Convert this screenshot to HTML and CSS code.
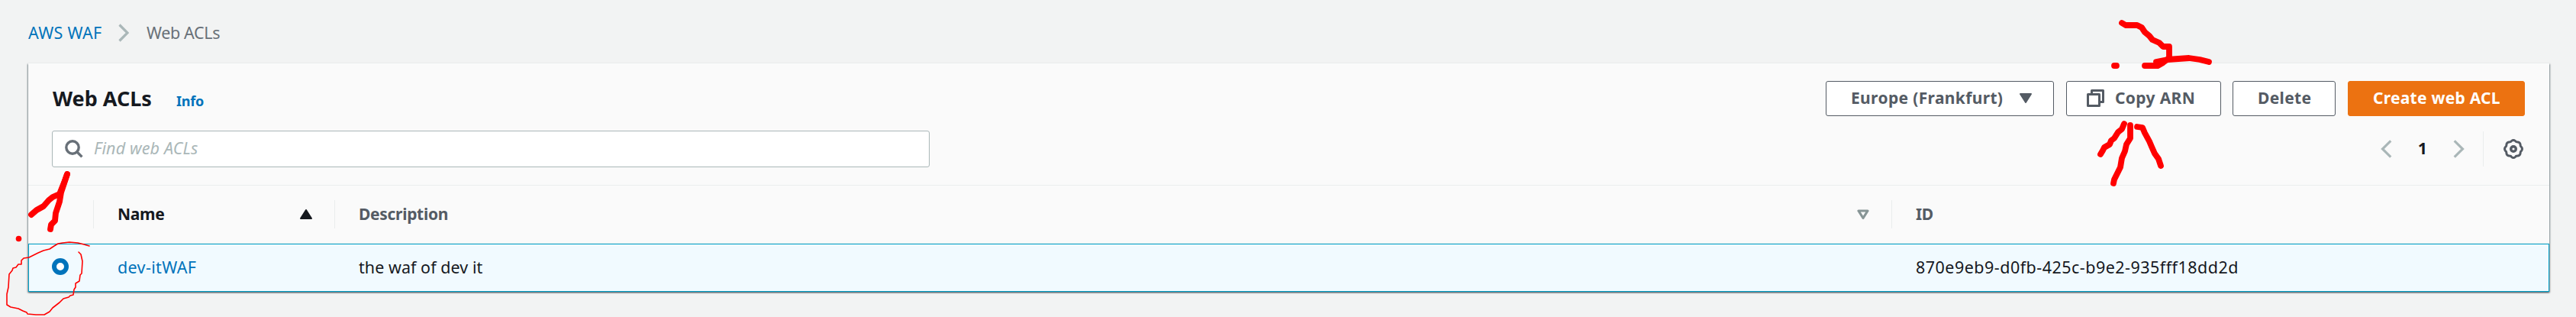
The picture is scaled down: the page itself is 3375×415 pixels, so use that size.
FILE: index.html
```html
<!DOCTYPE html>
<html lang="en">
<head>
<meta charset="utf-8">
<title>Web ACLs</title>
<link rel="stylesheet" href="styles.css">
</head>
<body>
<nav class="breadcrumb">
  <a class="crumb-link">AWS WAF</a>
  <svg class="crumb-chevron" width="14" height="24" viewBox="0 0 14 24"><path d="M1.5 1.5 12 12 1.5 22.5"/></svg>
  <span class="crumb-current">Web ACLs</span>
</nav>
<main class="panel">
  <header class="panel-head">
    <h1 class="title">Web ACLs</h1>
    <a class="info">Info</a>
    <div class="actions">
      <button class="btn region"><span>Europe (Frankfurt)</span><svg width="16" height="13" viewBox="0 0 16 13"><path d="M1 1h14L8 12z" fill="#545b64" stroke="#545b64" stroke-width="2" stroke-linejoin="round"/></svg></button>
      <button class="btn copy"><svg width="23" height="23" viewBox="0 0 23 23" fill="none" stroke="#545b64" stroke-width="3" stroke-linejoin="round"><path d="M1.5 6.5h15v15h-15z"/><path d="M6.500 6V1.500h15v15H17"/></svg><span>Copy ARN</span></button>
      <button class="btn delete"><span>Delete</span></button>
      <button class="btn primary"><span>Create web ACL</span></button>
    </div>
  </header>
  <div class="tools">
    <div class="search">
      <svg width="24" height="24" viewBox="0 0 24 24" fill="none" stroke="#687078" stroke-width="3.4"><circle cx="10" cy="10" r="8.2"/><path d="M15.8 15.8 22.4 22.4"/></svg>
      <span class="placeholder">Find web ACLs</span>
    </div>
    <div class="pager">
      <svg class="chev" width="15" height="24" viewBox="0 0 15 24"><path d="M13.3 1.3 2.5 12l10.8 10.7"/></svg>
      <span class="page">1</span>
      <svg class="chev" width="15" height="24" viewBox="0 0 15 24"><path d="M1.7 1.3 12.5 12 1.7 22.7"/></svg>
      <span class="divider"></span>
      <svg class="gear" width="26" height="26" viewBox="0 0 26 26" fill="none" stroke="#545b64"><path stroke-width="3" stroke-linejoin="round" d="M10.7 2.4Q13 .7 15.3 2.4Q16.2 4.1 18.9 3.9Q21.7 4.3 22.1 7.1Q21.9 9.8 23.6 10.7Q25.3 13 23.6 15.3Q21.9 16.2 22.1 18.9Q21.7 21.7 18.9 22.1Q16.2 21.9 15.3 23.6Q13 25.3 10.7 23.6Q9.8 21.9 7.1 22.1Q4.3 21.7 3.9 18.9Q4.1 16.2 2.4 15.3Q.7 13 2.4 10.7Q4.1 9.8 3.9 7.1Q4.3 4.3 7.1 3.9Q9.8 4.1 10.7 2.4Z"/><circle cx="13" cy="13" r="3.3" stroke-width="3.4"/></svg>
    </div>
  </div>
  <section class="table">
    <div class="row head">
      <div class="cell"></div>
      <div class="cell sorted"><span>Name</span><svg width="16" height="13" viewBox="0 0 16 13"><path d="M1 12h14L8 1z" fill="#16191f" stroke="#16191f" stroke-width="2" stroke-linejoin="round"/></svg></div>
      <div class="cell"><span>Description</span><svg width="16" height="14" viewBox="0 0 16 14"><path d="M2 2h12L8 11.5z" fill="none" stroke="#879596" stroke-width="3.2" stroke-linejoin="round"/></svg></div>
      <div class="cell"><span>ID</span></div>
    </div>
    <div class="row selected">
      <div class="cell pick"><span class="radio"></span></div>
      <div class="cell"><a class="name">dev-itWAF</a></div>
      <div class="cell desc">the waf of dev it</div>
      <div class="cell ident">870e9eb9-d0fb-425c-b9e2-935fff18dd2d</div>
    </div>
  </section>
</main>
<svg class="marks" width="3375" height="415" viewBox="0 0 3375 415">
  <g class="thick">
    <path d="M88 228 84 239 78 254 69 258 64 262 57 270 48 275 41 281"/>
    <path d="M88 228 84 240 80 252 78 264 73 279 72 289 67 294 66 300"/>
    <path d="M2780 30 2785 33 2800 33 2806 36 2810 42 2816 47 2820 52 2829 56 2834 61 2842 61 2842 76 2834 82 2827 86 2810 86"/>
    <path d="M2825 81 2840 78 2868 76 2882 78 2894 81"/>
    <path d="M2770 86h3"/>
    <path d="M2783 162 2780 169 2775 173 2770 181 2766 184 2764 189 2757 193 2755 197 2752 202"/>
    <path d="M2791 164 2791 181 2786 189 2784 198 2780 207 2778 219 2774 227 2770 235 2769 240"/>
    <path d="M2800 166 2807 167 2810 174 2816 185 2819 192 2823 201 2828 208 2831 217"/>
  </g>
  <circle cx="24.5" cy="312.5" r="3.8"/>
  <path class="thin" d="M117 322 110 320 102 318 91 317 82 318 76 319 71 322 65 326 57 328 50 331 42 335 38 337 31 338 28 341 28 346 24 346 21 350 17 351 16 354 12 359 11 376 9 385 9 399 14 402 24 404 30 407 35 409 36 411 47 412 58 412 65 408 69 403 78 396 83 391 90 389 92 387 96 386 97 379 99 376 99 371 104 368 105 360 107 358 108 342 106 333 103 330"/>
</svg>
</body>
</html>
```
FILE: styles.css
```css
* { box-sizing: border-box; }
body {
  margin: 0;
  height: 415px;
  overflow: hidden;
  background: #f2f3f3;
  color: #16191f;
  font: 21.5px/30px "Noto Sans", "Open Sans", sans-serif;
}
svg { display: block; flex: none; }
a { color: #0073bb; }
.breadcrumb {
  display: flex;
  align-items: center;
  height: 83px;
  padding: 2px 0 0 37px;
  letter-spacing: .3px;
}
.crumb-link { width: 118px; }
.crumb-chevron { width: 14px; margin-right: 23px; }
.crumb-chevron path, .chev path { fill: none; stroke: #aab7b8; stroke-width: 3.2; }
.crumb-current { color: #687078; letter-spacing: -.35px; }
.panel {
  width: 3303px;
  height: 299px;
  margin-left: 37px;
  background: #fafafa;
  box-shadow: 0 -1px 0 #eaeded, 0 1px 2px 0 #001c2480, 1px 1px 2px 0 #001c244d, -1px 1px 2px 0 #001c244d;
}
.panel-head { display: flex; height: 88px; padding: 23px 32px 0; }
.title { margin: 8px 33px 0 0; width: 129px; white-space: nowrap; font-size: 27px; line-height: 30px; }
.info { margin-top: 11px; font-size: 18px; line-height: 30px; font-weight: 700; letter-spacing: -.2px; }
.actions { display: flex; margin-left: auto; }
.btn {
  display: flex;
  align-items: center;
  height: 46px;
  padding: 0 0 2px 32px;
  border: 1px solid #545b64;
  border-radius: 3px;
  background: #fff;
  color: #545b64;
  font: 700 21px/30px "Noto Sans", "Open Sans", sans-serif;
  letter-spacing: .35px;
  white-space: nowrap;
}
.region { width: 299px; margin-right: 16px; }
.region span { width: 221px; text-align: left; }
.copy { width: 203px; margin-right: 15px; padding-left: 26px; }
.copy svg { margin-right: 14px; }
.delete { width: 135px; margin-right: 16px; }
.primary { width: 232px; background: #ec7211; border-color: #ec7211; color: #fff; letter-spacing: .25px; }
.tools { display: flex; justify-content: space-between; height: 71px; padding: 0 34px 0 31px; }
.search {
  display: flex;
  align-items: center;
  width: 1150px;
  height: 48px;
  padding-left: 16px;
  border: 1px solid #aab7b8;
  border-radius: 3px;
  background: #fff;
}
.placeholder { margin: 0 0 3px 14px; color: #aab7b8; font-style: italic; letter-spacing: .15px; }
.pager { display: flex; align-items: center; height: 47px; }
.page { width: 80px; padding-bottom: 2px; text-align: center; font-weight: 700; }
.divider { width: 1px; height: 46px; margin: 0 26px 0 24px; background: #eaeded; }
.row { display: grid; grid-template-columns: 86px 316px 2040px 1fr; }
.head { height: 77px; border-top: 1px solid #eaeded; border-bottom: 1px solid #eaeded; font-size: 21px; font-weight: 700; color: #545b64; letter-spacing: -.3px; }
.head .cell {
  display: flex;
  align-items: center;
  justify-content: space-between;
  height: 37px;
  margin-top: 19px;
  padding: 0 29px 0 31px;
  border-right: 1px solid #eaeded;
}
.head span { padding-bottom: 2px; }
.head .cell:last-child { border: 0; }
.head .sorted { color: #16191f; }
.selected { height: 63px; border: 1px solid #00a1c9; background: #f1faff; line-height: 60px; grid-template-columns: 85px 316px 2040px 1fr; }
.selected .cell { padding-left: 31px; white-space: nowrap; }
.selected .pick { padding: 18px 0 0 30px; }
.radio { display: block; width: 22px; height: 22px; border: 6px solid #0073bb; border-radius: 50%; background: #fff; }
.name { letter-spacing: .35px; }
.ident { letter-spacing: .48px; }
.desc { letter-spacing: .05px; }
.marks { position: absolute; left: 0; top: 0; fill: red; pointer-events: none; }
.thick path, .thin { fill: none; stroke: red; stroke-width: 7.8; stroke-linecap: round; stroke-linejoin: round; }
.marks .thin { stroke-width: 1.6; }
```
